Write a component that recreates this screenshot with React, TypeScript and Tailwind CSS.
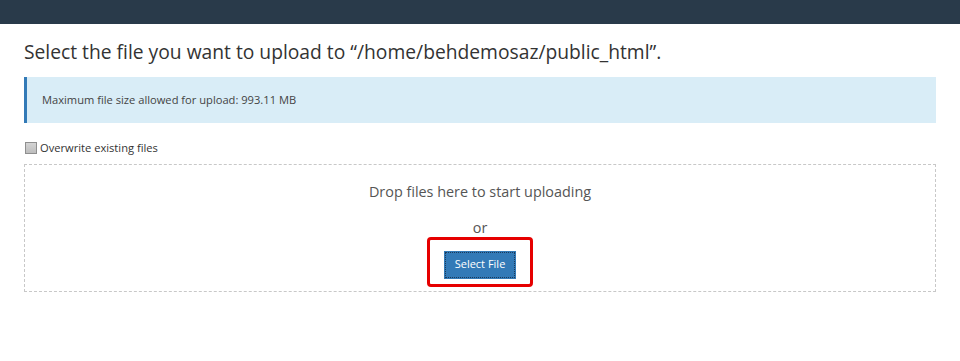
import React, { useState } from "react";

const App = () => {
  const [overwrite, setOverwrite] = useState(false);

  return (
    <div className="w-[960px] h-[361px] bg-white font-['Open_Sans',sans-serif] text-[#333]">
      {/* barra superior */}
      <div className="h-6 bg-[#293a4a]" />

      <div className="px-6">
        <h1 className="mt-[14px] text-[19.25px] leading-[28px] text-[#333]">
          Select the file you want to upload to “/home/behdemosaz/public_html”.
        </h1>

        <div className="mt-[11px] h-[46px] flex items-center bg-[#d9edf7] border-l-[3px] border-[#337ab7] pl-[15px] text-[11.15px] text-[#444]">
          Maximum file size allowed for upload: 993.11 MB
        </div>

        <label className="mt-[17px] flex items-center gap-[3px] text-[11.15px] text-[#333]">
          <input
            type="checkbox"
            checked={overwrite}
            onChange={(e) => setOverwrite(e.target.checked)}
            className="appearance-none w-[12px] h-[12px] m-0 ml-px border border-[#8f8f8f] bg-linear-to-b from-[#d4d4d4] to-[#bdbdbd] checked:bg-[#337ab7]"
          />
          Overwrite existing files
        </label>

        <div className="mt-[7px] h-[128px] border border-dashed border-[#c8c8c8] flex flex-col items-center">
          <p className="mt-[17px] text-[14.4px] leading-[20px] text-[#555]">
            Drop files here to start uploading
          </p>
          <p className="mt-[16px] text-[14.4px] leading-[20px] text-[#555]">or</p>
          <div className="mt-[-1px] w-[106px] h-[50px] border-[3px] border-[#e60000] rounded-[4px] flex items-start justify-center pt-[11px]">
            <button className="w-[72px] h-[28px] bg-[#337ab7] text-white text-[11px] outline-1 outline-dotted outline-[#1b3a5a] -outline-offset-2">
              Select File
            </button>
          </div>
        </div>
      </div>
    </div>
  );
};

export default App;
